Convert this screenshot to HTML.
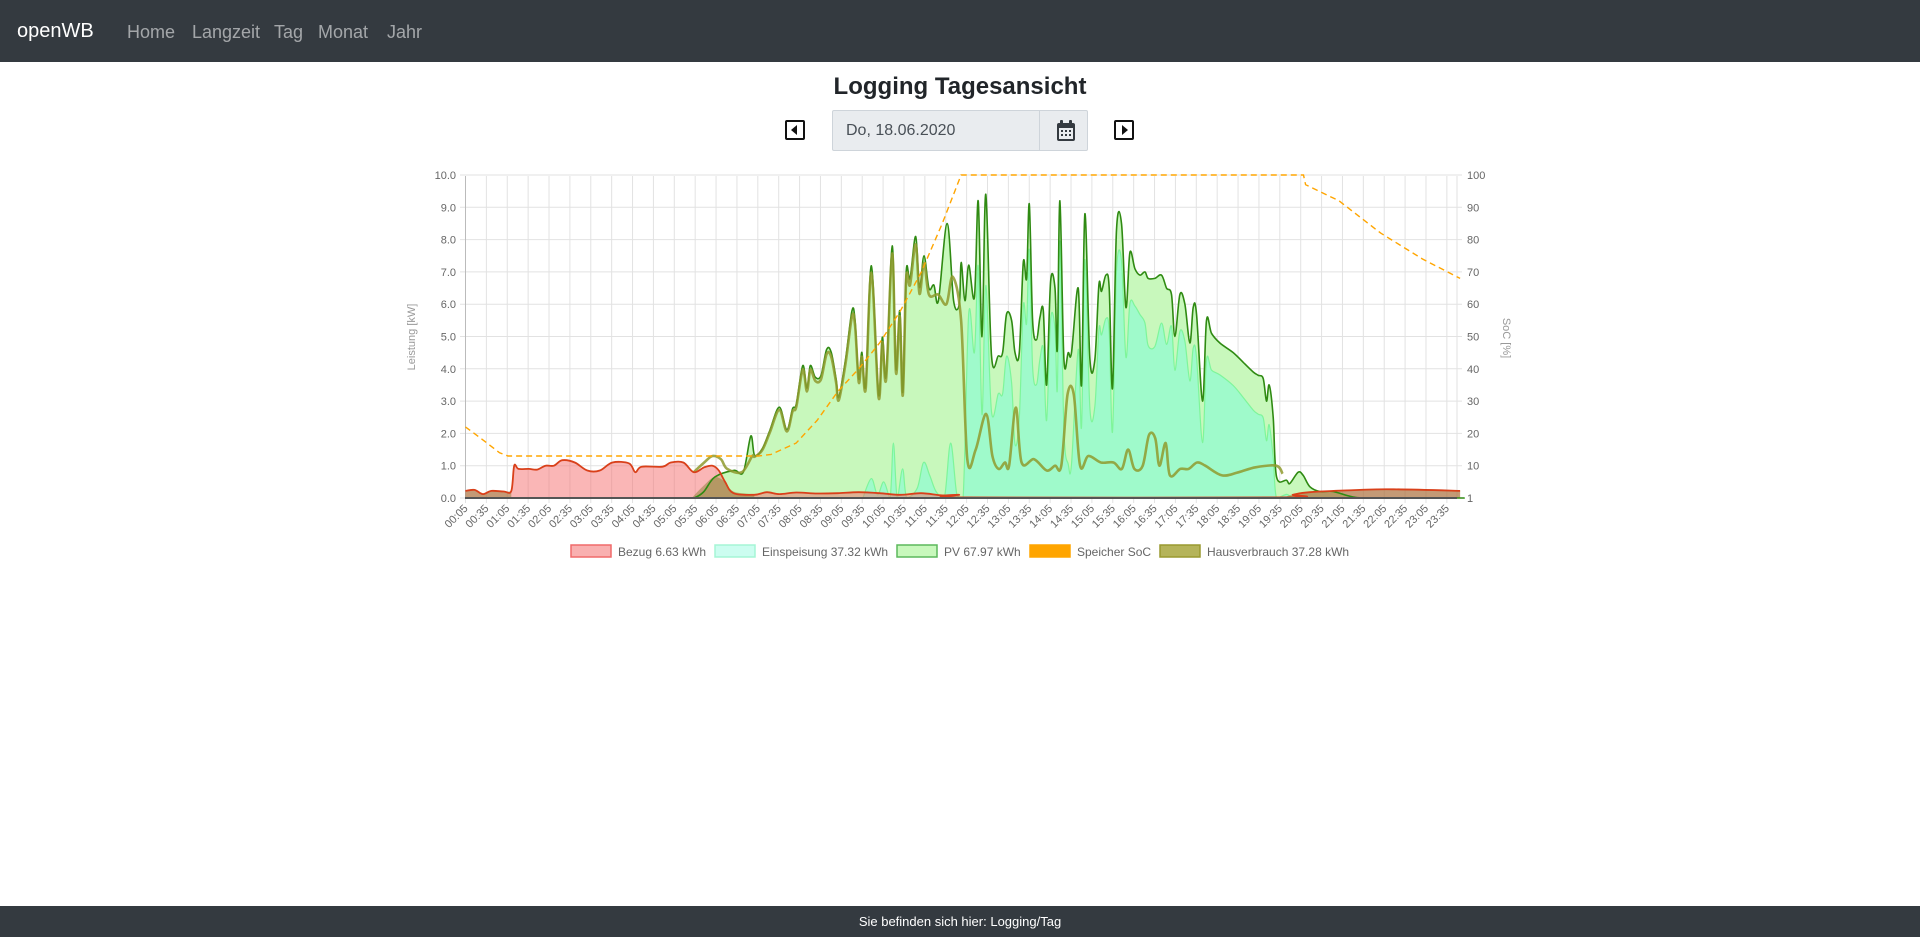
<!DOCTYPE html>
<html><head><meta charset="utf-8">
<style>
html,body{margin:0;padding:0;width:1920px;height:937px;overflow:hidden;background:#fff;font-family:"Liberation Sans",sans-serif}
.nav{position:absolute;left:0;top:0;width:1920px;height:62px;background:#343a40}
.nav span{position:absolute;top:22px;font-size:18px;color:rgba(255,255,255,.55)}
.nav .brand{color:#fff;font-size:20px;top:20px;left:17px}
h1{position:absolute;top:73px;left:0;width:1920px;text-align:center;margin:0;font-size:24px;font-weight:bold;color:#212529}
.date{position:absolute;left:832px;top:110px;width:254px;height:39px;background:#e9ecef;border:1px solid #ced4da;border-radius:2px}
.date .t{position:absolute;left:13px;top:11px;font-size:16px;color:#495057}
.date .d{position:absolute;left:206px;top:0;width:1px;height:39px;background:#ced4da}
.btn{position:absolute;top:120px;width:16px;height:16px;border:2px solid #111;border-radius:2px}
.foot{position:absolute;left:0;top:906px;width:1920px;height:31px;background:#343a40;color:#fff;font-size:13px;text-align:center;line-height:31px}
svg{position:absolute;left:0;top:0}
</style></head><body>
<div class="nav"><span class="brand">openWB</span><span style="left:127px">Home</span><span style="left:192px">Langzeit</span><span style="left:274px">Tag</span><span style="left:318px">Monat</span><span style="left:387px">Jahr</span></div>
<h1>Logging Tagesansicht</h1>
<div class="btn" style="left:785px"><div style="position:absolute;left:4px;top:3px;width:0;height:0;border-top:5px solid transparent;border-bottom:5px solid transparent;border-right:6px solid #111"></div></div>
<div class="date"><span class="t">Do, 18.06.2020</span><div class="d"></div>
<svg style="left:222px;top:8px" width="22" height="24" viewBox="0 0 22 24"><rect x="2" y="4" width="18" height="18" rx="2" fill="#343a40"/><rect x="4" y="9" width="14" height="11" fill="#e9ecef"/><rect x="5" y="1" width="3" height="6" rx="1" fill="#343a40"/><rect x="14" y="1" width="3" height="6" rx="1" fill="#343a40"/><g fill="#343a40"><rect x="6" y="11" width="2" height="2"/><rect x="10" y="11" width="2" height="2"/><rect x="14" y="11" width="2" height="2"/><rect x="6" y="15" width="2" height="2"/><rect x="10" y="15" width="2" height="2"/><rect x="14" y="15" width="2" height="2"/></g></svg></div>
<div class="btn" style="left:1114px"><div style="position:absolute;left:6px;top:3px;width:0;height:0;border-top:5px solid transparent;border-bottom:5px solid transparent;border-left:6px solid #111"></div></div>
<svg id="ch" width="1920" height="937" xmlns="http://www.w3.org/2000/svg" font-family="Liberation Sans, sans-serif">
<text x="415" y="337" font-size="11" fill="#999" text-anchor="middle" transform="rotate(-90 415 337)">Leistung [kW]</text>
<text x="1503" y="338" font-size="11" fill="#999" text-anchor="middle" transform="rotate(90 1503 338)">SoC [%]</text>
<g font-size="12" fill="#666">
<rect x="571" y="545" width="40" height="12" fill="#f9b0b0" stroke="#f06a6a" stroke-width="1.5"/><text x="618" y="556">Bezug 6.63 kWh</text>
<rect x="715" y="545" width="40" height="12" fill="#ccfdf0" stroke="#a5f5d5" stroke-width="1.5"/><text x="762" y="556">Einspeisung 37.32 kWh</text>
<rect x="897" y="545" width="40" height="12" fill="#c8f8bc" stroke="#5cb85c" stroke-width="1.5"/><text x="944" y="556">PV 67.97 kWh</text>
<rect x="1030" y="545" width="40" height="12" fill="#ffa500" stroke="#ffa500" stroke-width="1.5"/><text x="1077" y="556">Speicher SoC</text>
<rect x="1160" y="545" width="40" height="12" fill="#b5b45a" stroke="#9a9a30" stroke-width="1.5"/><text x="1207" y="556">Hausverbrauch 37.28 kWh</text>
</g>
<g id="g"></g>
</svg>
<div class="foot">Sie befinden sich hier: Logging/Tag</div>
<script>
var NS="http://www.w3.org/2000/svg",G=document.getElementById("g");
function el(n,a,txt){var e=document.createElementNS(NS,n);for(var k in a)e.setAttribute(k,a[k]);if(txt!=null)e.textContent=txt;G.appendChild(e);return e;}
function X(t){return 465.5+(t-0.0833)*41.76}
function Y(v){return 498-v*32.3}
function Ys(v){return 498-v*3.23}
for(var i=0;i<=47;i++){var x=465.5+i*20.88;el("line",{x1:x,y1:176,x2:x,y2:503,stroke:"#e2e2e2","stroke-width":1});
var m=5+i*30,h=Math.floor(m/60),mm=m%60;var lab=(h<10?"0":"")+h+":"+(mm<10?"0":"")+mm;
el("text",{x:x+3,y:509,"font-size":11,fill:"#666","text-anchor":"end",transform:"rotate(-45 "+(x+3)+" 509)"},lab);}
el("line",{x1:1457,y1:176,x2:1457,y2:498,stroke:"#e2e2e2"});
for(var v=0;v<=10;v++){var y=Y(v);el("line",{x1:460,y1:y,x2:1462,y2:y,stroke:"#e2e2e2"});
el("text",{x:456,y:y+4,"font-size":11,fill:"#666","text-anchor":"end"},v.toFixed(1));
el("text",{x:1467,y:y+4,"font-size":11,fill:"#666"},v==0?"1":String(v*10));}
el("line",{x1:465.5,y1:176,x2:465.5,y2:498,stroke:"#bbb"});
function interp(a,t){if(t<=a[0][0])return a[0][1];for(var i=1;i<a.length;i++){if(a[i][0]>=t){var p=a[i-1],q=a[i];return p[1]+(q[1]-p[1])*(t-p[0])/(q[0]-p[0]);}}return a[a.length-1][1];}
function path(a,fy){var P=a.map(function(p){return [X(p[0]),fy(p[1])]});var d="M"+P[0][0].toFixed(1)+","+P[0][1].toFixed(1);
for(var i=0;i<P.length-1;i++){var p0=P[i-1]||P[i],p1=P[i],p2=P[i+1],p3=P[i+2]||p2;var s=6;
var c1x=p1[0]+(p2[0]-p0[0])/s,c1y=p1[1]+(p2[1]-p0[1])/s,c2x=p2[0]-(p3[0]-p1[0])/s,c2y=p2[1]-(p3[1]-p1[1])/s;
c1y=Math.min(c1y,498);c2y=Math.min(c2y,498);
d+="C"+c1x.toFixed(1)+","+c1y.toFixed(1)+" "+c2x.toFixed(1)+","+c2y.toFixed(1)+" "+p2[0].toFixed(1)+","+p2[1].toFixed(1);}return d;}
function area(a,fy){return path(a,fy)+"L"+X(a[a.length-1][0]).toFixed(1)+",498L"+X(a[0][0]).toFixed(1)+",498Z";}
function zs(zx){return 0.0833+(zx-172)/55.1*0.5}
function zk(zy){return (1018-zy)/97.1}
var z2=[[775,1018],[800,1000],[830,955],[880,935],[905,940],[925,832],[935,890],[955,870],[975,815],[1000,745],[1020,812],[1035,750],[1045,735],[1062,620],[1073,688],[1082,620],[1095,655],[1110,650],[1125,572],[1137,580],[1150,660],[1157,715],[1175,600],[1192,455],[1200,485],[1210,660],[1218,580],[1228,680],[1243,320],[1262,707],[1272,535],[1282,650],[1298,260],[1308,630],[1318,455],[1326,700],[1335,338],[1345,358],[1360,232],[1370,385],[1382,290],[1395,388],[1408,378],[1420,425],[1443,193],[1460,425],[1475,435],[1480,310],[1490,425],[1500,318],[1515,415],[1525,125],[1535,533],[1545,105],[1560,590]];
var PV=[[0.08,0],[5.4,0]];z2.forEach(function(p){PV.push([zs(p[0]),zk(p[1])])});
var z4=[[500,5.0],[515,9.3],[535,4.4],[548,4.5],[560,5.7],[575,5.5],[585,4.5],[598,4.5],[610,7.3],[620,6.8],[628,9.1],[638,5.5],[650,4.9],[660,5.6],[670,5.8],[680,3.5],[692,6.7],[705,6.5],[712,4.6]];
z4.forEach(function(p){var t=8.572+p[0]/125.3;if(t>PV[PV.length-1][0]+0.02)PV.push([t,p[1]])});
var z3=[[180,9.2],[192,4.3],[205,4.5],[215,4.5],[235,6.5],[245,3.5],[255,8.8],[270,4.3],[285,4.3],[297,6.6],[305,6.4],[318,6.9],[328,6.5],[338,3.4],[350,8.3],[365,8.5],[378,5.9],[390,7.6],[405,7.1],[420,6.9],[435,7.0],[445,6.8],[465,6.8],[485,6.9],[500,6.5],[515,6.3],[525,5.0],[540,6.3],[555,6.0],[570,4.8],[580,5.9],[590,5.7],[608,3.0],[620,5.5],[635,5.1],[660,4.8],[700,4.5],[730,4.2],[760,3.9],[775,3.8],[790,3.7],[800,3.0],[808,3.5],[820,2.5],[830,0.66],[860,0.55],[870,0.45],[895,0.8],[910,0.7],[930,0.35],[960,0.2],[1000,0.2],[1060,0.03],[1120,0],[1370,0]];
z3.forEach(function(p){var t=12.88+p[0]/125.3;if(t>PV[PV.length-1][0]+0.02)PV.push([t,p[1]])});
PV.push([23.92,0]);
var HA=[[0.08,0.22],[0.3,0.25],[0.5,0.12],[0.7,0.22],[1.0,0.2],[1.18,0.22],[1.25,1.0],[1.35,0.9],[1.6,0.9],[1.8,0.88],[2.0,1.0],[2.2,1.0],[2.4,1.17],[2.7,1.1],[3.0,0.85],[3.3,0.85],[3.6,1.1],[4.0,1.07],[4.15,0.8],[4.3,0.97],[4.8,0.97],[5.0,1.1],[5.3,1.1],[5.55,0.8],[5.8,1.1],[6.0,1.3],[6.2,1.2],[6.35,0.9],[6.7,0.8],[6.95,1.3]];
PV.forEach(function(p){if(p[0]>7.0&&p[0]<11.25)HA.push([p[0],p[1]*0.97])});
HA=HA.concat([[11.4,6.3],[11.6,6.0],[11.75,6.85],[11.95,5.5],[12.1,1.2],[12.3,1.5],[12.55,2.6],[12.7,1.3],[12.85,0.9],[13.0,1.1],[13.1,1.0],[13.26,2.8],[13.4,1.1],[13.7,1.2],[14.0,0.85],[14.2,1.0],[14.35,1.0],[14.5,3.2],[14.65,3.2],[14.8,1.0],[15.0,1.3],[15.3,1.1],[15.6,1.1],[15.8,0.9],[15.95,1.5],[16.1,0.9],[16.3,1.0],[16.45,1.95],[16.6,1.85],[16.7,1.0],[16.85,1.7],[16.95,0.7],[17.2,0.9],[17.4,0.9],[17.6,1.1],[17.8,1.0],[18.2,0.7],[18.6,0.8],[19.0,0.95],[19.5,1.0],[19.65,0.75],[19.75,0.15],[20.0,0.15],[20.5,0.2],[21.5,0.25],[22.3,0.26],[23.9,0.22]]);
var R=HA.filter(function(p){return p[0]<5.56});
R=R.concat([[5.8,0.95],[6.0,1.0],[6.15,0.85],[6.3,0.5],[6.5,0.15],[7.0,0.1],[7.3,0.18],[7.6,0.12],[8.0,0.17],[8.5,0.14],[9.0,0.15],[9.5,0.18],[10.0,0.15],[10.5,0.1],[11.0,0.15],[11.5,0.08],[11.9,0.1],[12.05,0.02],[19.6,0.02],[19.9,0.1],[20.3,0.18],[21.5,0.25],[22.3,0.27],[23.9,0.22]]);
var E=[[9.6,0],[9.8,0.6],[9.95,0.1],[10.1,0.5],[10.25,0],[10.33,1.7],[10.42,0],[10.55,0.9],[10.65,0],[10.9,0.3],[11.05,1.1],[11.2,0.7],[11.35,0.2],[11.55,0],[11.7,1.7],[11.85,0.1],[12.0,0]];
PV.forEach(function(p){if(p[0]>12.05&&p[0]<19.9)E.push([p[0],Math.max(0,p[1]-interp(HA,p[0])-0.25)])});E.push([19.95,0]);
var S=[[0.08,22],[0.5,18],[0.9,14],[1.1,13],[7.1,13],[7.4,13.5],[8.0,17],[8.5,24],[9.0,33],[9.5,40],[10.0,48],[10.5,58],[11.0,70],[11.5,85],[11.95,100],[20.15,100],[20.2,97],[21,92],[22,82],[23,74],[23.9,68]];
el("path",{d:area(PV,Y),fill:"#c8f8bc"});
el("path",{d:area(E,Y),fill:"#9ffacb"});
el("path",{d:path(E,Y),fill:"none",stroke:"#7ef59a","stroke-width":1.2});
el("path",{d:area(R,Y),fill:"rgba(245,110,110,0.5)"});
var H1=[[0.08,0.22],[0.3,0.25],[0.5,0.12],[0.7,0.22],[1.0,0.2],[1.18,0.2]];
var H2=[[5.5,0],[5.8,0.4],[6.05,0.65],[6.3,0.5],[6.5,0.2],[7.0,0.12]];
var H3=[[19.75,0.05],[20.0,0.15],[20.5,0.2],[21.5,0.25],[22.3,0.26],[23.9,0.22]];
[H1,H2,H3].forEach(function(h){el("path",{d:area(h,Y),fill:"rgba(130,120,40,0.45)"})});
el("path",{d:path(PV,Y),fill:"none",stroke:"#2f8a12","stroke-width":1.6});
el("path",{d:path(HA.filter(function(p){return p[0]>5.5&&p[0]<19.7}),Y),fill:"none",stroke:"#8f9a2e","stroke-width":2.6,"stroke-opacity":0.85});
el("path",{d:path(R,Y),fill:"none",stroke:"#d9401a","stroke-width":1.8});
var sp="M"+S.map(function(p){return X(p[0]).toFixed(1)+","+Ys(p[1]).toFixed(1)}).join("L");
el("path",{d:sp,fill:"none",stroke:"#ffa500","stroke-width":1.4,"stroke-dasharray":"6,4"});
el("line",{x1:465,y1:498,x2:1457,y2:498,stroke:"#555","stroke-width":2});
</script>
</body></html>
